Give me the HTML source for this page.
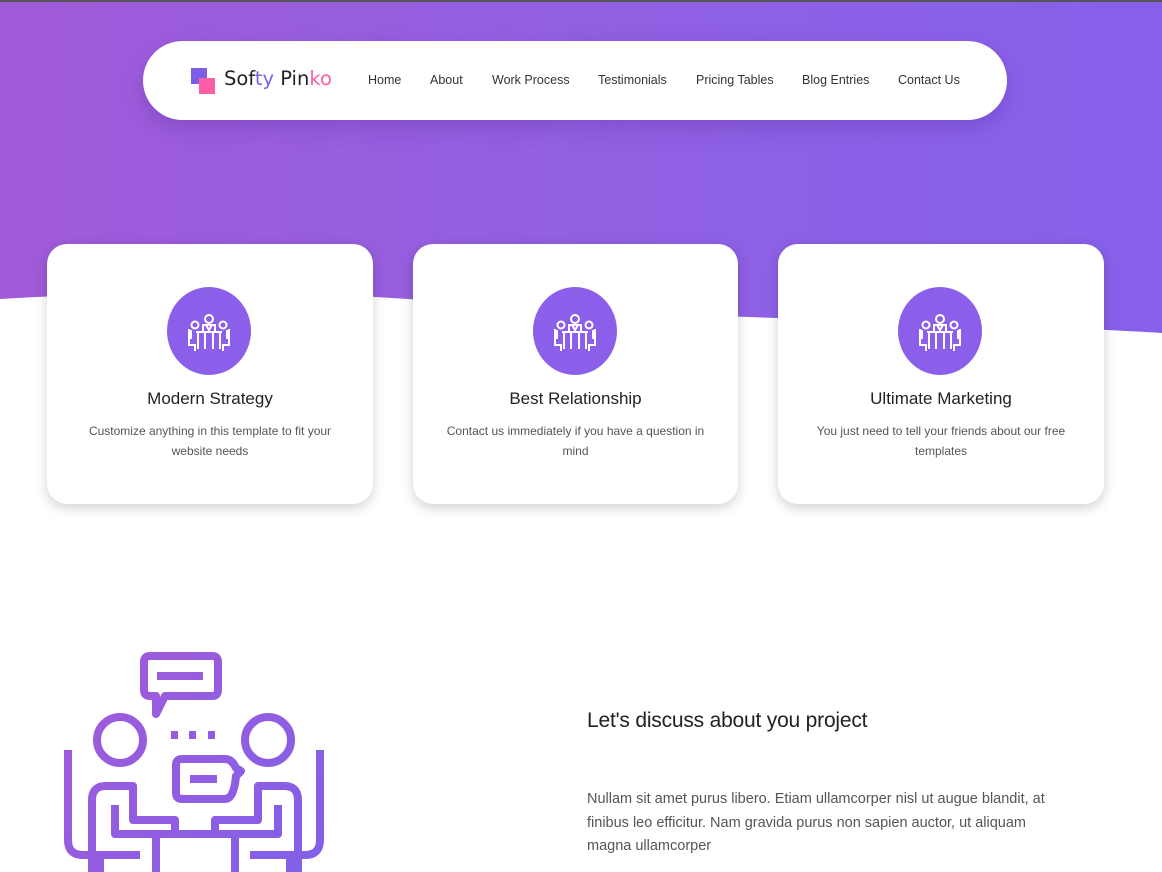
<!DOCTYPE html>
<html><head><meta charset="utf-8"><style>
*{margin:0;padding:0;box-sizing:border-box}
body{width:1162px;height:872px;overflow:hidden;background:#fff;font-family:"Liberation Sans",sans-serif;position:relative}
.hero{position:absolute;left:0;top:0;width:1162px;height:340px;background:linear-gradient(90deg,#a05ad9 0%,#9160e2 50%,#8660ea 100%)}
.topline{position:absolute;left:0;top:0;width:1162px;height:2px;background:#555}
.nav{position:absolute;left:143px;top:41px;width:864px;height:79px;background:#fff;border-radius:40px;box-shadow:0 8px 20px rgba(60,20,120,.2)}
.logo{position:absolute;left:48px;top:27px;}
.sq1{position:absolute;left:0;top:0;width:16px;height:16px;background:#7b5ee8}
.sq2{position:absolute;left:8px;top:10px;width:16px;height:16px;background:#fb5ea7}
.brand{position:absolute;left:81px;top:26px;font-size:19.5px;color:#222;font-family:"DejaVu Sans",sans-serif;white-space:nowrap}
.nav a{position:absolute;top:32px;font-size:12.5px;color:#333;text-decoration:none;white-space:nowrap}
.card{position:absolute;top:244px;width:326px;height:260px;background:#fff;border-radius:20px;box-shadow:0 4px 12px rgba(0,0,0,.18);text-align:center}
.circ{position:absolute;left:120px;top:43px;width:84px;height:88px;border-radius:50%;background:#8b5fe9}
.card h3{position:absolute;top:145px;width:100%;font-weight:normal;font-size:17px;color:#222}
.card p{position:absolute;top:177px;left:30px;right:30px;font-size:12px;line-height:20px;color:#555}
h2{position:absolute;left:587px;top:709px;font-size:21px;font-weight:normal;color:#222;letter-spacing:-.2px}
.txt{position:absolute;left:587px;top:788px;width:470px;font-size:14.5px;line-height:23.5px;color:#555}
</style></head><body>
<div class="hero"></div>
<svg style="position:absolute;left:0;top:280px" width="1162" height="70"><path d="M0 19 C 150 10, 300 10, 450 22 C 700 40, 950 40, 1162 53 L1162 70 L0 70 Z" fill="#fff"/></svg>
<div class="topline"></div>
<div class="nav">
 <div class="logo"><div class="sq1"></div><div class="sq2"></div></div>
 <div class="brand">Sof<span style="color:#7b5ee8">ty</span> Pin<span style="color:#fb5ea7">ko</span></div>
 <a style="left:225px">Home</a><a style="left:287px">About</a><a style="left:349px">Work Process</a><a style="left:455px">Testimonials</a><a style="left:553px">Pricing Tables</a><a style="left:659px">Blog Entries</a><a style="left:755px">Contact Us</a>
</div>
<svg width="0" height="0" style="position:absolute"><defs><g id="ic" fill="none" stroke="#fff" stroke-width="2"><circle cx="0" cy="-14" r="4"/><circle cx="-14" cy="-8" r="3.5"/><circle cx="14" cy="-8" r="3.5"/><path d="M-6 -2 L-6 -8 L6 -8 L6 -2 M-3 -8 L0 -3 L3 -8"/><path d="M-13 -1 L13 -1 M-11 -1 L-11 16 M11 -1 L11 16 M-4 -1 L-4 16 M4 -1 L4 16"/><path d="M-20 -4 L-20 12 L-14 12 L-14 18 M20 -4 L20 12 L14 12 L14 18 M-18 -3 L-18 6 M18 -3 L18 6"/></g></defs></svg>
<div class="card" style="left:47px"><div class="circ"><svg width="84" height="88"><use href="#ic" x="42" y="46"/></svg></div><h3>Modern Strategy</h3><p>Customize anything in this template to fit your website needs</p></div>
<div class="card" style="left:413px;width:325px"><div class="circ"><svg width="84" height="88"><use href="#ic" x="42" y="46"/></svg></div><h3>Best Relationship</h3><p>Contact us immediately if you have a question in mind</p></div>
<div class="card" style="left:778px"><div class="circ"><svg width="84" height="88"><use href="#ic" x="42" y="46"/></svg></div><h3>Ultimate Marketing</h3><p>You just need to tell your friends about our free templates</p></div>
<svg style="position:absolute;left:0;top:600px" width="400" height="272">
<defs><linearGradient id="g" gradientUnits="userSpaceOnUse" x1="60" y1="50" x2="330" y2="272"><stop offset="0" stop-color="#a45ad8"/><stop offset="1" stop-color="#8060ea"/></linearGradient></defs>
<g fill="none" stroke="url(#g)" stroke-width="8" stroke-linejoin="round">
<path d="M150 56 L212 56 Q218 56 218 62 L218 90 Q218 96 212 96 L165 96 L156 114 L156 96 L150 96 Q144 96 144 90 L144 62 Q144 56 150 56 Z"/>
<path d="M157 76 L203 76"/>
<circle cx="120" cy="140" r="23"/>
<circle cx="268" cy="140" r="23"/>
<path d="M171 135 L178 135 M189 135 L196 135 M208 135 L215 135"/>
<path d="M182 159 L225 159 Q232 159 236 168 L241 171 L236 176 Q234 199 225 199 L182 199 Q176 199 176 193 L176 165 Q176 159 182 159 Z"/>
<path d="M190 179 L217 179"/>
<path d="M68 150 L68 240 Q68 255 83 255 L140 255"/>
<path d="M92 272 L92 200 Q92 186 106 186 L133 186 L133 220 L175 220 L175 232"/>
<path d="M115 205 L115 234 L175 234 L228 234 L278 234 L278 205"/>
<path d="M156 234 L156 272 M235 234 L235 272"/>
<path d="M320 150 L320 240 Q320 255 305 255 L250 255"/>
<path d="M298 272 L298 200 Q298 186 284 186 L258 186 L258 220 L215 220 L215 232"/>
<path d="M100 255 L100 272 M290 255 L290 272"/>
</g></svg>
<h2>Let's discuss about you project</h2>
<div class="txt">Nullam sit amet purus libero. Etiam ullamcorper nisl ut augue blandit, at finibus leo efficitur. Nam gravida purus non sapien auctor, ut aliquam magna ullamcorper</div>
</body></html>
